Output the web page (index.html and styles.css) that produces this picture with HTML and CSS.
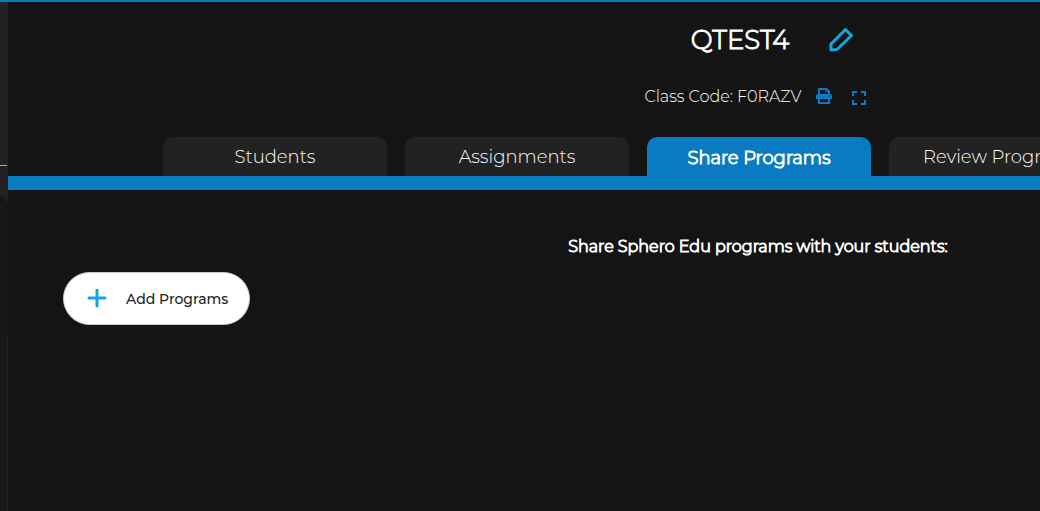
FILE: index.html
```html
<!DOCTYPE html>
<html lang="en">
<head>
  <meta charset="UTF-8">
  <title>QTEST4</title>
  <link rel="stylesheet" href="styles.css">
</head>
<body>

  <aside class="sidebar">
    <div class="sidebar-top"></div>
    <div class="sidebar-panel"></div>
    <div class="sidebar-rest"></div>
  </aside>

  <main class="content">
    <header class="class-header">
      <div class="title-row">
        <h1>QTEST4</h1>
        <button type="button" class="icon-button" aria-label="Edit class name">
          <svg width="24" height="24" viewBox="0 0 24 24" fill="none" stroke="#12a5de" stroke-width="3" stroke-linejoin="round">
            <path d="M2 16 16.500 1.500 22.500 7.500 8 21.500 2 22z"/>
          </svg>
        </button>
      </div>
      <div class="code-row">
        <p>Class Code: F0RAZV</p>
        <button type="button" class="icon-button print" aria-label="Print class code">
          <svg width="16" height="16" viewBox="0 0 16 16" fill="none" stroke="#0a7bc0" stroke-width="2">
            <path d="M3 7V1h7.500L13 3.500V7"/>
            <path d="M10 1v3h3" stroke-width="1"/>
            <path d="M0 11V8q0-2 2-2h12q2 0 2 2v3z" fill="#0a7bc0" stroke="none"/>
            <path d="M3 10h10v5H3z" fill="#141414"/>
            <path d="M13 8h1" stroke="#141414" stroke-width="1"/>
          </svg>
        </button>
        <button type="button" class="icon-button expand" aria-label="Show class code full screen">
          <svg width="14" height="14" viewBox="0 0 14 14" fill="none" stroke="#0a7bc0" stroke-width="2">
            <path d="M1 5V1h4M9 1h4v4M13 9v4H9M5 13H1V9"/>
          </svg>
        </button>
      </div>
    </header>

    <nav class="tabs">
      <a href="#students" class="tab">Students</a>
      <a href="#assignments" class="tab">Assignments</a>
      <a href="#share" class="tab active">Share Programs</a>
      <a href="#review" class="tab">Review Programs</a>
    </nav>

    <section class="share">
      <h2>Share Sphero Edu programs with your students:</h2>
      <button type="button" class="add-button">
        <svg width="20" height="20" viewBox="0 0 20 20" fill="none" stroke="#12a5de" stroke-width="3" stroke-linecap="round">
          <path d="M10 1v16M2 9h16"/>
        </svg>
        Add Programs
      </button>
    </section>
  </main>

</body>
</html>
```

FILE: styles.css
```css
* {
  box-sizing: border-box;
}

body {
  margin: 0;
  min-height: 100vh;
  display: flex;
  overflow: hidden;
  border-top: 2px solid #0a7bc0;
  background: #141414;
  color: #fff;
  font-family: Montserrat, Inter, sans-serif;
  font-weight: 300;
}

h1, h2, p {
  margin: 0;
}

/* bold look on top of the light font */
h1, h2, .tab.active {
  font-weight: 300;
  -webkit-text-stroke: 1px;
}

button {
  font-family: inherit;
  cursor: pointer;
}

svg {
  display: block;
}

/* edge of the sidebar */
.sidebar {
  flex: none;
  width: 8px;
  display: flex;
  flex-direction: column;
  background: linear-gradient(#222 202px, #141414 202px);
}

.sidebar-top {
  height: 164px;
  margin-right: 1px;
  border-bottom: 1px solid #66c5cc;
}

.sidebar-panel {
  height: 140px;
  margin: 30px 1px 0 0;
  border-top-right-radius: 6px;
  background: #171717;
}

.sidebar-rest {
  flex: 1;
  background: #171717;
  border-right: 1px solid #222;
}

/* wider than small windows, the right side is cut off */
.content {
  flex: 1 0 auto;
  min-width: 1500px;
}

.class-header {
  display: flex;
  flex-direction: column;
  align-items: center;
  gap: 29px;
  padding-top: 20px;
}

.title-row {
  display: flex;
  align-items: center;
  gap: 40px;
  padding-left: 28px;
}

h1 {
  font-size: 26px;
  line-height: 36px;
}

.icon-button {
  padding: 0;
  border: 0;
  background: none;
}

.code-row {
  display: flex;
  align-items: center;
  gap: 14px;
  padding-right: 6px;
  font-size: 16px;
  line-height: 20px;
}

.print {
  margin-bottom: 2px;
}

.expand {
  margin: 2px 0 0 6px;
}

.tabs {
  display: flex;
  gap: 18px;
  margin-top: 30px;
  padding-left: 155px;
  border-bottom: 14px solid #0a7bc0;
}

.tab {
  width: 224px;
  height: 39px;
  border-radius: 10px 10px 0 0;
  background: #222;
  color: #fff;
  font-size: 18px;
  line-height: 41px;
  text-align: center;
  text-decoration: none;
}

.tab.active {
  background: #0a7bc0;
  line-height: 43px;
}

.share {
  display: flex;
  flex-direction: column;
  align-items: flex-start;
  gap: 15px;
  padding: 47px 55px;
}

h2 {
  align-self: center;
  font-size: 16px;
  line-height: 20px;
}

.add-button {
  display: flex;
  align-items: center;
  gap: 19px;
  height: 53px;
  padding: 0 21px 0 23px;
  border: 1px solid #ccc;
  border-radius: 27px;
  background: #fff;
  color: #222;
  font-size: 14px;
  font-weight: 500;
}
```
